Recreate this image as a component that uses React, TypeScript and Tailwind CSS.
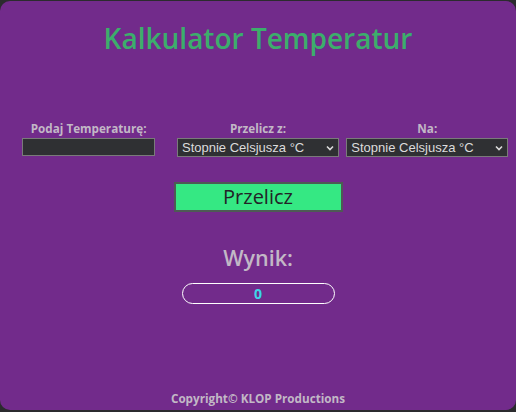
import React from "react";

export default function App() {
  const label = "text-[11.7px] font-bold text-[#c2b8c6] leading-[14px]";
  const sel =
    "h-[19px] bg-[#2f3033] border border-[#7a7a7a] text-[#dcdcdc] text-[13px] leading-[17px] pl-[4px] pr-[2px] flex items-center justify-between";
  return (
    <div className="w-[516px] h-[412px] bg-[#2b2b2e] pt-[1px]" style={{ fontFamily: '"Open Sans", sans-serif' }}>
      <div className="h-[409px] bg-[#722b8b] rounded-[10px] flex flex-col items-center">
        <h1 className="mt-[18px] text-[28px] leading-[38px] font-semibold text-[#3cae6c]">Kalkulator Temperatur</h1>
        <div className="mt-[64px] w-full grid grid-cols-3 px-[4px]">
          <div className="flex flex-col items-center">
            <div className={label}>Podaj Temperaturę:</div>
            <div className="mt-[3px] w-[133px] h-[18px] bg-[#2f3033] border border-[#7a7a7a]" />
          </div>
          <div className="flex flex-col items-center">
            <div className={label}>Przelicz z:</div>
            <div className={"mt-[3px] w-[162px] " + sel} style={{ fontFamily: '"Liberation Sans", Arial, sans-serif' }}>
              <span>Stopnie Celsjusza °C</span>
              <svg width="12" height="12" viewBox="0 0 12 12"><path d="M3 4.5 L6 7.5 L9 4.5" stroke="#dcdcdc" strokeWidth="1.6" fill="none" /></svg>
            </div>
          </div>
          <div className="flex flex-col items-center">
            <div className={label}>Na:</div>
            <div className={"mt-[3px] w-[162px] " + sel} style={{ fontFamily: '"Liberation Sans", Arial, sans-serif' }}>
              <span>Stopnie Celsjusza °C</span>
              <svg width="12" height="12" viewBox="0 0 12 12"><path d="M3 4.5 L6 7.5 L9 4.5" stroke="#dcdcdc" strokeWidth="1.6" fill="none" /></svg>
            </div>
          </div>
        </div>
        <button className="mt-[25px] w-[169px] h-[30px] bg-[#35e883] border-2 border-[#4e5a55] text-[20px] leading-[24px] text-[#232327]">Przelicz</button>
        <div className="mt-[32px] text-[21.5px] leading-[28px] font-semibold text-[#c2b8c6]">Wynik:</div>
        <div className="mt-[11px] w-[153px] h-[21px] rounded-full border border-white flex items-center justify-center text-[14px] font-bold text-[#3dd6e8]">0</div>
        <div className="mt-auto mb-[4px] text-[11.7px] font-bold text-[#c2b8c6] leading-[16px]">Copyright© KLOP Productions</div>
      </div>
    </div>
  );
}
